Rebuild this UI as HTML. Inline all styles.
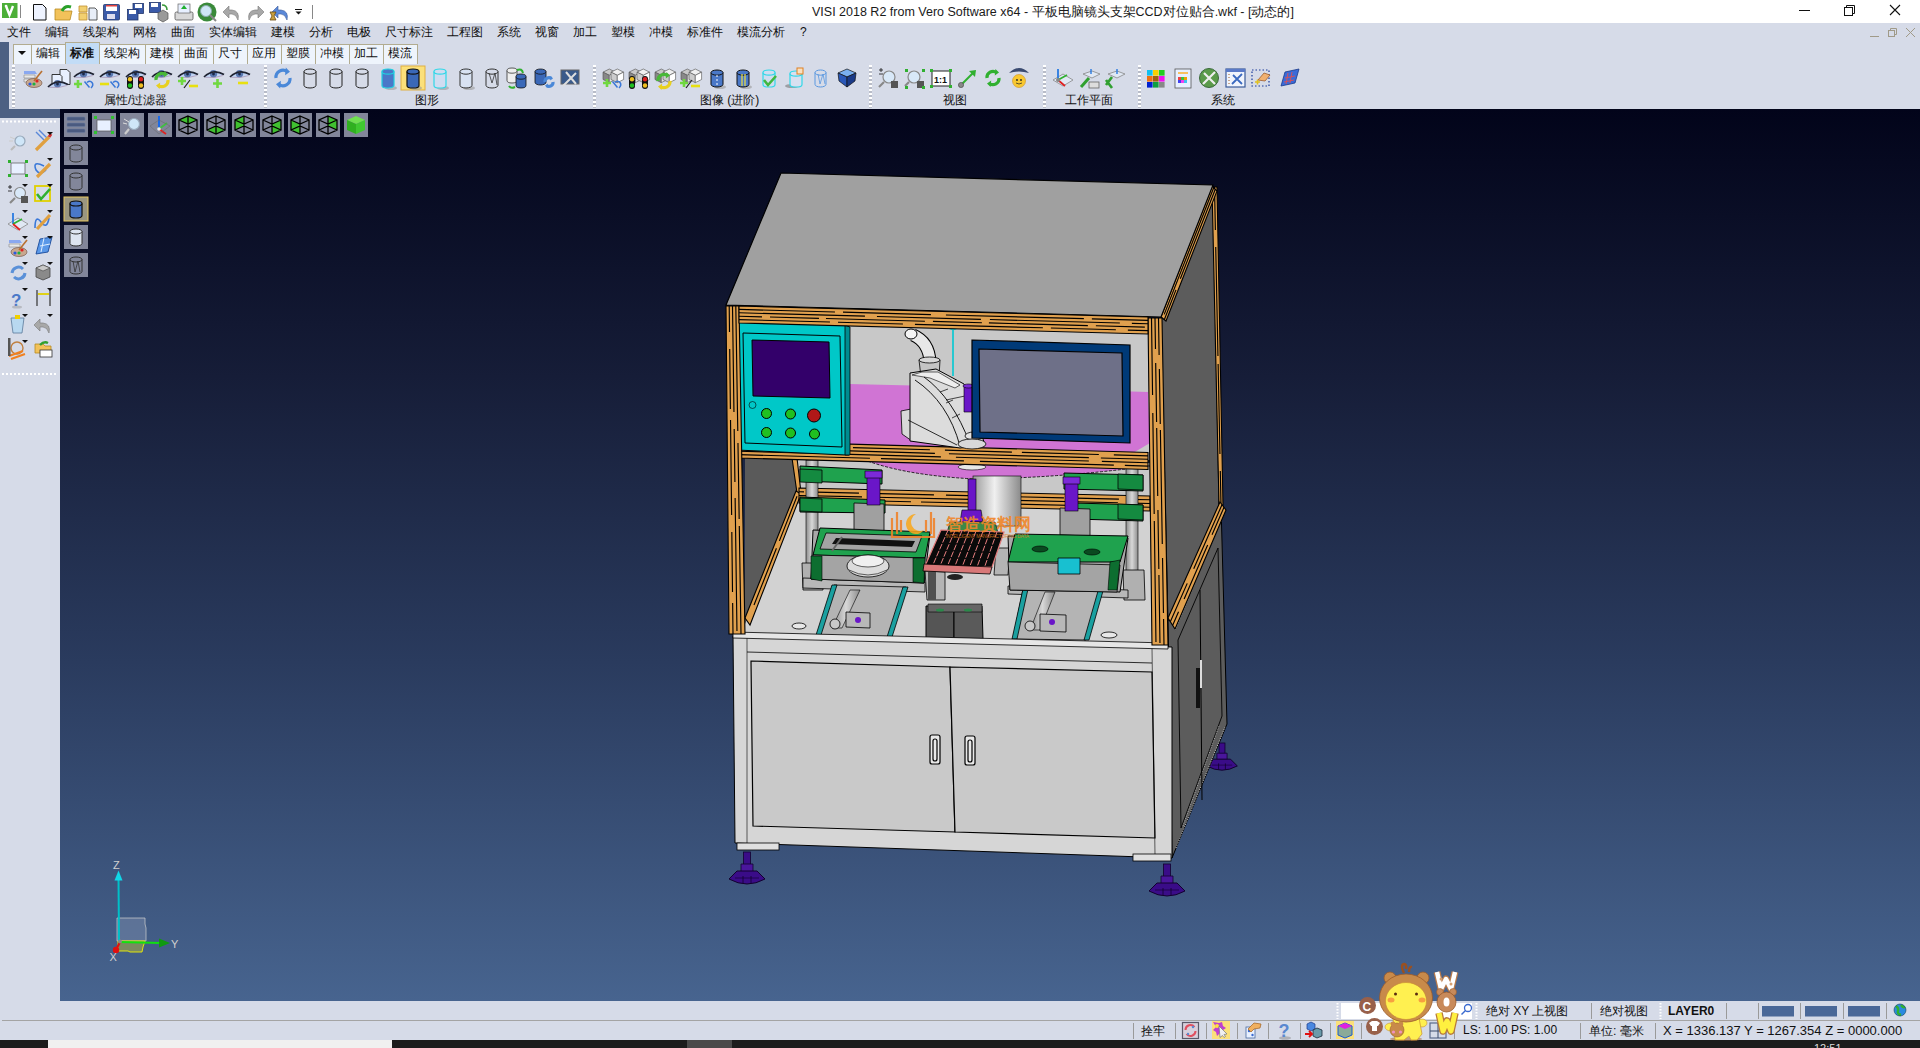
<!DOCTYPE html><html><head><meta charset="utf-8"><style>
*{box-sizing:border-box}
html,body{margin:0;padding:0;width:1920px;height:1048px;overflow:hidden;background:#d6dbe8;font-family:"Liberation Sans",sans-serif;font-size:12px;color:#000}
.a{position:absolute}
.t{position:absolute;white-space:nowrap;line-height:1}
svg{overflow:visible}
</style></head><body>
<div class="a" style="left:0;top:0;width:1920px;height:23px;background:#fff"></div>
<div class="a" style="left:0;top:23px;width:1920px;height:86px;background:#d6dbe8"></div>
<div class="a" style="left:0;top:42px;width:9px;height:76px;background:#4c6083"></div>
<div class="a" style="left:0;top:109px;width:60px;height:9px;background:#4c6083"></div>
<div class="a" style="left:60px;top:109px;width:1860px;height:892px;background:linear-gradient(#02041a 0%,#161d38 30%,#2a3b5e 62%,#47648f 100%)"></div>
<div class="a" style="left:0;top:118px;width:60px;height:883px;background:#d6dbe8"></div>
<div class="a" style="left:0;top:1001px;width:1920px;height:39px;background:#d6dbe8"></div>
<div class="a" style="left:2px;top:1020px;width:1918px;height:1px;background:#a4a4a4"></div>
<div class="a" style="left:0;top:1040px;width:1920px;height:8px;background:#1c1c1c"></div>
<div class="a" style="left:48px;top:1040px;width:344px;height:8px;background:#f0f0f0"></div>
<div class="a" style="left:687px;top:1040px;width:45px;height:8px;background:#4a4a4a"></div>
<div class="t" style="left:812px;top:6px;font-size:12.5px;color:#1a1a1a">VISI 2018 R2 from Vero Software x64 - 平板电脑镜头支架CCD对位贴合.wkf - [动态的]</div>
<svg class="a" style="left:0;top:0" width="1920" height="23"><line x1="1799" y1="10.5" x2="1810" y2="10.5" stroke="#111" stroke-width="1"/><rect x="1844.5" y="7.5" width="8" height="8" fill="none" stroke="#111"/><path d="M1846.5 7.5v-2h8v8h-2" fill="none" stroke="#111"/><path d="M1890 5l10 10M1900 5l-10 10" stroke="#111" stroke-width="1.1"/></svg>
<svg class="a" style="left:0;top:0" width="330" height="23">
<rect x="2" y="3" width="15.5" height="15" fill="#4caf38"/><path d="M6 6l3.5 9 3.5-9" stroke="#fff" stroke-width="2.4" fill="none"/><circle cx="6" cy="6" r="1.3" fill="#fff"/>
<line x1="20.5" y1="5" x2="20.5" y2="18" stroke="#888"/>
<path d="M33.5 4.5h9l3.5 3.5v12h-12.5z" fill="#eef3ff" stroke="#111"/>
<path d="M55 9h7l2 2h8l-2 9h-15z" fill="#f2c25a" stroke="#b88a20" stroke-width=".8"/><path d="M62 11q3-6 9-4" stroke="#2aa02a" stroke-width="3" fill="none"/>
<path d="M79 6h8v6h-8zM79 13h8v7h-8z" fill="#f2d070" stroke="#c09030" stroke-width=".8"/><path d="M89 8h6l2 2v10h-8z" fill="#e8eef8" stroke="#333" stroke-width=".8"/>
<rect x="103.5" y="4.5" width="16" height="15.5" rx="1" fill="#3a5aa8" stroke="#22366a" stroke-width=".8"/><rect x="106" y="5" width="11" height="6" fill="#fff"/><rect x="106" y="5" width="11" height="1.5" fill="#e04040"/><rect x="107" y="14" width="8" height="5" fill="#dde"/>
<rect x="133" y="3.5" width="10.5" height="10" fill="#3a5aa8" stroke="#22366a" stroke-width=".8"/><rect x="135" y="4" width="7" height="4" fill="#fff"/>
<rect x="127.5" y="9.5" width="10.5" height="10.5" fill="#3a5aa8" stroke="#22366a" stroke-width=".8"/><rect x="129" y="10" width="7" height="4" fill="#fff"/>
<rect x="149.5" y="2.5" width="11" height="10" fill="#3a5aa8" stroke="#22366a" stroke-width=".8"/><rect x="151" y="3" width="7" height="4" fill="#fff"/>
<path d="M158 13l5-3 5 3v6l-5 3-5-3z" fill="#9a9a9a" stroke="#555" stroke-width=".7"/><path d="M162 5q5 0 5 5" stroke="#3a9a3a" stroke-width="1.6" fill="none"/>
<rect x="175" y="12" width="18" height="8" rx="1.5" fill="#d8d8d8" stroke="#555" stroke-width=".8"/><rect x="178" y="4" width="12" height="9" fill="#e8f0ff" stroke="#666" stroke-width=".7"/><path d="M184 5l-3 4h6z" fill="#20b030"/>
<circle cx="207" cy="12" r="9.5" fill="#3a8a3a"/><circle cx="206" cy="11" r="5.5" fill="#cfe6f6" stroke="#8aa" stroke-width="1"/><line x1="210" y1="15" x2="216" y2="21" stroke="#888" stroke-width="2"/>
<path d="M238 20q2-9-6-10h-3v-4l-6 6 6 6v-4h3q4 0 6 6z" fill="#a8a8a8" stroke="#777" stroke-width=".6"/>
<path d="M249 20q-2-9 6-10h3v-4l6 6-6 6v-4h-3q-4 0-6 6z" fill="#a8a8a8" stroke="#777" stroke-width=".6"/>
<path d="M287 20q2-9-6-10h-3v-4l-6 6 6 6v-4h3q4 0 6 6z" fill="#5a88d8" stroke="#3a5a9a" stroke-width=".6"/><path d="M270 12h6l-2 4 2 4h-6l2-4z" fill="#c8a040" stroke="#6a4a10" stroke-width=".8"/>
<path d="M295 9.5h7" stroke="#111"/><path d="M295.5 11.5h6l-3 3z" fill="#111"/>
<line x1="312.5" y1="5" x2="312.5" y2="19" stroke="#888"/>
</svg>
<div class="t" style="left:7px;top:26px;font-size:12px;color:#111">文件</div>
<div class="t" style="left:45px;top:26px;font-size:12px;color:#111">编辑</div>
<div class="t" style="left:83px;top:26px;font-size:12px;color:#111">线架构</div>
<div class="t" style="left:133px;top:26px;font-size:12px;color:#111">网格</div>
<div class="t" style="left:171px;top:26px;font-size:12px;color:#111">曲面</div>
<div class="t" style="left:209px;top:26px;font-size:12px;color:#111">实体编辑</div>
<div class="t" style="left:271px;top:26px;font-size:12px;color:#111">建模</div>
<div class="t" style="left:309px;top:26px;font-size:12px;color:#111">分析</div>
<div class="t" style="left:347px;top:26px;font-size:12px;color:#111">电极</div>
<div class="t" style="left:385px;top:26px;font-size:12px;color:#111">尺寸标注</div>
<div class="t" style="left:447px;top:26px;font-size:12px;color:#111">工程图</div>
<div class="t" style="left:497px;top:26px;font-size:12px;color:#111">系统</div>
<div class="t" style="left:535px;top:26px;font-size:12px;color:#111">视窗</div>
<div class="t" style="left:573px;top:26px;font-size:12px;color:#111">加工</div>
<div class="t" style="left:611px;top:26px;font-size:12px;color:#111">塑模</div>
<div class="t" style="left:649px;top:26px;font-size:12px;color:#111">冲模</div>
<div class="t" style="left:687px;top:26px;font-size:12px;color:#111">标准件</div>
<div class="t" style="left:737px;top:26px;font-size:12px;color:#111">模流分析</div>
<div class="t" style="left:800px;top:26px;font-size:12px;color:#111">?</div>
<svg class="a" style="left:1860px;top:26px" width="60" height="14"><line x1="10" y1="10.5" x2="19" y2="10.5" stroke="#a09a88" stroke-width="1"/><rect x="28.5" y="4.5" width="6" height="6" fill="none" stroke="#a09a88"/><path d="M30.5 4.5v-2h6v6h-2" fill="none" stroke="#a09a88"/><path d="M46 2l9 9M55 2l-9 9" stroke="#a09a88" stroke-width="1"/></svg>
<div class="a" style="left:12.5px;top:44px;width:19.0px;height:20px;background:#eef4fc;border:1px solid #b2ac90;border-bottom:none"></div>
<div class="a" style="left:30.5px;top:44px;width:35.0px;height:20px;background:#eef4fc;border:1px solid #b2ac90;border-bottom:none"></div>
<div class="t" style="left:30.5px;top:47px;width:34.0px;text-align:center;font-size:12px;font-weight:normal;color:#111">编辑</div>
<div class="a" style="left:64.5px;top:42px;width:35.0px;height:22px;background:#c2dcf6;border:1px solid #b2ac90;border-bottom:none"></div>
<div class="t" style="left:64.5px;top:47px;width:34.0px;text-align:center;font-size:12px;font-weight:bold;color:#111">标准</div>
<div class="a" style="left:98.5px;top:44px;width:47.0px;height:20px;background:#eef4fc;border:1px solid #b2ac90;border-bottom:none"></div>
<div class="t" style="left:98.5px;top:47px;width:46.0px;text-align:center;font-size:12px;font-weight:normal;color:#111">线架构</div>
<div class="a" style="left:144.5px;top:44px;width:35.0px;height:20px;background:#eef4fc;border:1px solid #b2ac90;border-bottom:none"></div>
<div class="t" style="left:144.5px;top:47px;width:34.0px;text-align:center;font-size:12px;font-weight:normal;color:#111">建模</div>
<div class="a" style="left:178.5px;top:44px;width:35.0px;height:20px;background:#eef4fc;border:1px solid #b2ac90;border-bottom:none"></div>
<div class="t" style="left:178.5px;top:47px;width:34.0px;text-align:center;font-size:12px;font-weight:normal;color:#111">曲面</div>
<div class="a" style="left:212.5px;top:44px;width:35.0px;height:20px;background:#eef4fc;border:1px solid #b2ac90;border-bottom:none"></div>
<div class="t" style="left:212.5px;top:47px;width:34.0px;text-align:center;font-size:12px;font-weight:normal;color:#111">尺寸</div>
<div class="a" style="left:246.5px;top:44px;width:35.0px;height:20px;background:#eef4fc;border:1px solid #b2ac90;border-bottom:none"></div>
<div class="t" style="left:246.5px;top:47px;width:34.0px;text-align:center;font-size:12px;font-weight:normal;color:#111">应用</div>
<div class="a" style="left:280.5px;top:44px;width:35.0px;height:20px;background:#eef4fc;border:1px solid #b2ac90;border-bottom:none"></div>
<div class="t" style="left:280.5px;top:47px;width:34.0px;text-align:center;font-size:12px;font-weight:normal;color:#111">塑膜</div>
<div class="a" style="left:314.5px;top:44px;width:35.0px;height:20px;background:#eef4fc;border:1px solid #b2ac90;border-bottom:none"></div>
<div class="t" style="left:314.5px;top:47px;width:34.0px;text-align:center;font-size:12px;font-weight:normal;color:#111">冲模</div>
<div class="a" style="left:348.5px;top:44px;width:35.0px;height:20px;background:#eef4fc;border:1px solid #b2ac90;border-bottom:none"></div>
<div class="t" style="left:348.5px;top:47px;width:34.0px;text-align:center;font-size:12px;font-weight:normal;color:#111">加工</div>
<div class="a" style="left:382.5px;top:44px;width:35.0px;height:20px;background:#eef4fc;border:1px solid #b2ac90;border-bottom:none"></div>
<div class="t" style="left:382.5px;top:47px;width:34.0px;text-align:center;font-size:12px;font-weight:normal;color:#111">模流</div>
<svg class="a" style="left:17px;top:50px" width="10" height="6"><path d="M1 1h8l-4 4z" fill="#111"/></svg>
<div class="a" style="left:12px;top:65px;width:3px;height:43px;background:repeating-linear-gradient(#fff 0 2px,#b8bcc8 2px 4px)"></div>
<div class="a" style="left:263.5px;top:65px;width:3px;height:43px;background:repeating-linear-gradient(#fff 0 2px,#b8bcc8 2px 4px)"></div>
<div class="a" style="left:593px;top:65px;width:3px;height:43px;background:repeating-linear-gradient(#fff 0 2px,#b8bcc8 2px 4px)"></div>
<div class="a" style="left:869px;top:65px;width:3px;height:43px;background:repeating-linear-gradient(#fff 0 2px,#b8bcc8 2px 4px)"></div>
<div class="a" style="left:1042.5px;top:65px;width:3px;height:43px;background:repeating-linear-gradient(#fff 0 2px,#b8bcc8 2px 4px)"></div>
<div class="a" style="left:1137.5px;top:65px;width:3px;height:43px;background:repeating-linear-gradient(#fff 0 2px,#b8bcc8 2px 4px)"></div>
<div class="t" style="left:104px;top:94px;font-size:12px;color:#111">属性/过滤器</div>
<div class="t" style="left:415px;top:94px;font-size:12px;color:#111">图形</div>
<div class="t" style="left:700px;top:94px;font-size:12px;color:#111">图像 (进阶)</div>
<div class="t" style="left:943px;top:94px;font-size:12px;color:#111">视图</div>
<div class="t" style="left:1065px;top:94px;font-size:12px;color:#111">工作平面</div>
<div class="t" style="left:1211px;top:94px;font-size:12px;color:#111">系统</div>
<svg class="a" style="left:0;top:0" width="1920" height="109"><g transform="translate(24,69)"><path d="M0 2h11l2 3h-13z" fill="#8aa8f0"/><path d="M0 6h11v3h-11zM0 10h11v3h-11z" fill="#e8e8e8" stroke="#888" stroke-width=".6"/><ellipse cx="10" cy="14" rx="8" ry="4.5" fill="#c8a890" stroke="#7a5a4a" stroke-width=".7"/><circle cx="6" cy="15" r="1.6" fill="#2a5ae0"/><circle cx="10" cy="15" r="1.6" fill="#20b040"/><circle cx="13" cy="12" r="1.6" fill="#e02020"/><path d="M10 12l8-10" stroke="#b87030" stroke-width="1.6"/></g><path d="M60 69.5h7l3 3v12h-10z" fill="#e8f0ff" stroke="#222" stroke-width=".9"/><path d="M52 74.5h8l2 2v9h-10z" fill="#e8f0ff" stroke="#222" stroke-width=".9"/><g transform="translate(48,79) scale(1)"><path d="M0 8 Q9 -1 20 5.5 Q11 10 0 8z" fill="#c0d4f4"/><circle cx="9.5" cy="4.8" r="3.7" fill="#5a78b0"/><circle cx="9.5" cy="5" r="1.4" fill="#1a2848"/><circle cx="9" cy="3.2" r=".9" fill="#e0ecff"/><path d="M0 8 Q9 -1 20 5.5" stroke="#1e2230" stroke-width="1.7" fill="none"/><path d="M1 8.3 Q11 9.6 19 6.5" stroke="#a890b0" stroke-width=".7" fill="none"/></g><g transform="translate(74,69) scale(1)"><path d="M0 8 Q9 -1 20 5.5 Q11 10 0 8z" fill="#c0d4f4"/><circle cx="9.5" cy="4.8" r="3.7" fill="#5a78b0"/><circle cx="9.5" cy="5" r="1.4" fill="#1a2848"/><circle cx="9" cy="3.2" r=".9" fill="#e0ecff"/><path d="M0 8 Q9 -1 20 5.5" stroke="#1e2230" stroke-width="1.7" fill="none"/><path d="M1 8.3 Q11 9.6 19 6.5" stroke="#a890b0" stroke-width=".7" fill="none"/></g><path d="M74 84.0h8M78.0 80v8" stroke="#70d840" stroke-width="2.6"/><path d="M84.5 81.5l5 6M87 82.5q3-2.5 5 0t-1 5.5" stroke="#3a78d8" stroke-width="1.5" fill="none"/><g transform="translate(100,69) scale(1)"><path d="M0 8 Q9 -1 20 5.5 Q11 10 0 8z" fill="#c0d4f4"/><circle cx="9.5" cy="4.8" r="3.7" fill="#5a78b0"/><circle cx="9.5" cy="5" r="1.4" fill="#1a2848"/><circle cx="9" cy="3.2" r=".9" fill="#e0ecff"/><path d="M0 8 Q9 -1 20 5.5" stroke="#1e2230" stroke-width="1.7" fill="none"/><path d="M1 8.3 Q11 9.6 19 6.5" stroke="#a890b0" stroke-width=".7" fill="none"/></g><path d="M100 84h9" stroke="#e8e010" stroke-width="2.6"/><path d="M110.5 81.5l5 6M113 82.5q3-2.5 5 0t-1 5.5" stroke="#3a78d8" stroke-width="1.5" fill="none"/><g transform="translate(126,69) scale(1)"><path d="M0 8 Q9 -1 20 5.5 Q11 10 0 8z" fill="#c0d4f4"/><circle cx="9.5" cy="4.8" r="3.7" fill="#5a78b0"/><circle cx="9.5" cy="5" r="1.4" fill="#1a2848"/><circle cx="9" cy="3.2" r=".9" fill="#e0ecff"/><path d="M0 8 Q9 -1 20 5.5" stroke="#1e2230" stroke-width="1.7" fill="none"/><path d="M1 8.3 Q11 9.6 19 6.5" stroke="#a890b0" stroke-width=".7" fill="none"/></g><rect x="127" y="76" width="6" height="13" rx="3" fill="#111"/><circle cx="130" cy="79.3" r="2.2" fill="#f0c020"/><circle cx="130" cy="85.5" r="2.2" fill="#20c020"/><rect x="138" y="76" width="6" height="13" rx="3" fill="#111"/><circle cx="141" cy="79.3" r="2.2" fill="#e02020"/><circle cx="141" cy="85.5" r="2.2" fill="#f0c020"/><g transform="translate(152,69) scale(1)"><path d="M0 8 Q9 -1 20 5.5 Q11 10 0 8z" fill="#c0d4f4"/><circle cx="9.5" cy="4.8" r="3.7" fill="#5a78b0"/><circle cx="9.5" cy="5" r="1.4" fill="#1a2848"/><circle cx="9" cy="3.2" r=".9" fill="#e0ecff"/><path d="M0 8 Q9 -1 20 5.5" stroke="#1e2230" stroke-width="1.7" fill="none"/><path d="M1 8.3 Q11 9.6 19 6.5" stroke="#a890b0" stroke-width=".7" fill="none"/></g><path d="M156 80 a6 6 0 0 1 9.600000000000001 -5.4" stroke="#48b838" stroke-width="3.2" fill="none"/><path d="M164.4 71.0 l3.5999999999999996 3.5999999999999996 l-4.199999999999999 3.0z" fill="#48b838"/><path d="M168 80 a6 6 0 0 1 -9.600000000000001 5.4" stroke="#e8d020" stroke-width="3.2" fill="none"/><path d="M159.6 89.0 l-3.5999999999999996 -3.5999999999999996 l4.199999999999999 -3.0z" fill="#e8d020"/><g transform="translate(178,69) scale(1)"><path d="M0 8 Q9 -1 20 5.5 Q11 10 0 8z" fill="#c0d4f4"/><circle cx="9.5" cy="4.8" r="3.7" fill="#5a78b0"/><circle cx="9.5" cy="5" r="1.4" fill="#1a2848"/><circle cx="9" cy="3.2" r=".9" fill="#e0ecff"/><path d="M0 8 Q9 -1 20 5.5" stroke="#1e2230" stroke-width="1.7" fill="none"/><path d="M1 8.3 Q11 9.6 19 6.5" stroke="#a890b0" stroke-width=".7" fill="none"/></g><path d="M178 81.0h8M182.0 77v8" stroke="#70d840" stroke-width="2.6"/><path d="M184 88l6-8" stroke="#222" stroke-width="1.2"/><path d="M189 86h9" stroke="#e8e010" stroke-width="2.6"/><g transform="translate(204,69) scale(1)"><path d="M0 8 Q9 -1 20 5.5 Q11 10 0 8z" fill="#c0d4f4"/><circle cx="9.5" cy="4.8" r="3.7" fill="#5a78b0"/><circle cx="9.5" cy="5" r="1.4" fill="#1a2848"/><circle cx="9" cy="3.2" r=".9" fill="#e0ecff"/><path d="M0 8 Q9 -1 20 5.5" stroke="#1e2230" stroke-width="1.7" fill="none"/><path d="M1 8.3 Q11 9.6 19 6.5" stroke="#a890b0" stroke-width=".7" fill="none"/></g><path d="M213 83.5h9M217.5 79v9" stroke="#70d840" stroke-width="2.6"/><g transform="translate(230,69) scale(1)"><path d="M0 8 Q9 -1 20 5.5 Q11 10 0 8z" fill="#c0d4f4"/><circle cx="9.5" cy="4.8" r="3.7" fill="#5a78b0"/><circle cx="9.5" cy="5" r="1.4" fill="#1a2848"/><circle cx="9" cy="3.2" r=".9" fill="#e0ecff"/><path d="M0 8 Q9 -1 20 5.5" stroke="#1e2230" stroke-width="1.7" fill="none"/><path d="M1 8.3 Q11 9.6 19 6.5" stroke="#a890b0" stroke-width=".7" fill="none"/></g><path d="M238 83h10" stroke="#e8e010" stroke-width="2.6"/><path d="M276 78 a7 7 0 0 1 11.200000000000001 -6.3" stroke="#4a88d8" stroke-width="3.2" fill="none"/><path d="M285.8 67.5 l4.2 4.2 l-4.8999999999999995 3.5z" fill="#4a88d8"/><path d="M290 78 a7 7 0 0 1 -11.200000000000001 6.3" stroke="#4a88d8" stroke-width="3.2" fill="none"/><path d="M280.2 88.5 l-4.2 -4.2 l4.8999999999999995 -3.5z" fill="#4a88d8"/><path d="M304 71.6 v13.8 a6.0 2.6 0 0 0 12 0 v-13.8" fill="none" stroke="#222" stroke-width="1"/><ellipse cx="310.0" cy="71.6" rx="6.0" ry="2.6" fill="none" stroke="#222" stroke-width="1"/><path d="M330 71.6 v13.8 a6.0 2.6 0 0 0 12 0 v-13.8" fill="none" stroke="#222" stroke-width="1"/><ellipse cx="336.0" cy="71.6" rx="6.0" ry="2.6" fill="none" stroke="#222" stroke-width="1"/><path d="M356 71.6 v13.8 a6.0 2.6 0 0 0 12 0 v-13.8" fill="none" stroke="#222" stroke-width="1"/><ellipse cx="362.0" cy="71.6" rx="6.0" ry="2.6" fill="none" stroke="#222" stroke-width="1"/><ellipse cx="391.0" cy="88" rx="6.0" ry="2" fill="#999" opacity=".6"/><path d="M382 71.6 v13.8 a6.0 2.6 0 0 0 12 0 v-13.8" fill="#4a78c8" stroke="#20d0e0" stroke-width="1.2"/><ellipse cx="388.0" cy="71.6" rx="6.0" ry="2.6" fill="#4a78c8" stroke="#20d0e0" stroke-width="1.2"/><rect x="401" y="66" width="24" height="24" fill="#fbe07a" stroke="#e0b040" stroke-width="1"/><ellipse cx="416.0" cy="88" rx="6.0" ry="2" fill="#999" opacity=".6"/><path d="M407 71.6 v13.8 a6.0 2.6 0 0 0 12 0 v-13.8" fill="#3a68b8" stroke="#111" stroke-width="1.2"/><ellipse cx="413.0" cy="71.6" rx="6.0" ry="2.6" fill="#3a68b8" stroke="#111" stroke-width="1.2"/><ellipse cx="443.0" cy="88" rx="6.0" ry="2" fill="#999" opacity=".6"/><path d="M434 71.6 v13.8 a6.0 2.6 0 0 0 12 0 v-13.8" fill="#d0dcf0" stroke="#30d8e8" stroke-width="1.2"/><ellipse cx="440.0" cy="71.6" rx="6.0" ry="2.6" fill="#d0dcf0" stroke="#30d8e8" stroke-width="1.2"/><ellipse cx="469.0" cy="88" rx="6.0" ry="2" fill="#999" opacity=".6"/><path d="M460 71.6 v13.8 a6.0 2.6 0 0 0 12 0 v-13.8" fill="#d8e2f2" stroke="#333" stroke-width="1"/><ellipse cx="466.0" cy="71.6" rx="6.0" ry="2.6" fill="#d8e2f2" stroke="#333" stroke-width="1"/><path d="M486 71.6 v13.8 a6.0 2.6 0 0 0 12 0 v-13.8" fill="none" stroke="#333" stroke-width="1"/><ellipse cx="492.0" cy="71.6" rx="6.0" ry="2.6" fill="none" stroke="#333" stroke-width="1"/><path d="M489 73l3 10 3-10 2 12" stroke="#333" stroke-width=".8" fill="none"/><path d="M507 70.6 v9.8 a5.0 2.6 0 0 0 10 0 v-9.8" fill="#eee" stroke="#333" stroke-width="0.8"/><ellipse cx="512.0" cy="70.6" rx="5.0" ry="2.6" fill="#eee" stroke="#333" stroke-width="0.8"/><path d="M516 76.6 v8.8 a5.0 2.6 0 0 0 10 0 v-8.8" fill="#3a68b8" stroke="#111" stroke-width="0.8"/><ellipse cx="521.0" cy="76.6" rx="5.0" ry="2.6" fill="#3a68b8" stroke="#111" stroke-width="0.8"/><path d="M517 70q5-2 6 3M509 86q2 3 6 1" stroke="#30b030" stroke-width="2" fill="none"/><path d="M535 71.6 v10.8 a5.5 2.6 0 0 0 11 0 v-10.8" fill="#3a68b8" stroke="#111" stroke-width="0.8"/><ellipse cx="540.5" cy="71.6" rx="5.5" ry="2.6" fill="#3a68b8" stroke="#111" stroke-width="0.8"/><path d="M545 82 a4 4 0 0 1 6.4 -3.6" stroke="#4a88d8" stroke-width="3.2" fill="none"/><path d="M550.6 76.0 l2.4 2.4 l-2.8 2.0z" fill="#4a88d8"/><path d="M553 82 a4 4 0 0 1 -6.4 3.6" stroke="#4a88d8" stroke-width="3.2" fill="none"/><path d="M547.4 88.0 l-2.4 -2.4 l2.8 -2.0z" fill="#4a88d8"/><rect x="561" y="70" width="18" height="14" fill="#3a5a8a" stroke="#666" stroke-width="1"/><path d="M563 86l13-13M566 72l10 12" stroke="#ddd" stroke-width="2"/><g transform="translate(603,69) scale(1.05)"><path d="M0 3l6-3 6 3-6 3z" fill="#c8c8c8" stroke="#555" stroke-width=".6"/><path d="M0 3v7l6 3v-7z" fill="#888" stroke="#555" stroke-width=".6"/><path d="M12 3v7l-6 3v-7z" fill="#e8e8e8" stroke="#555" stroke-width=".6"/></g><g transform="translate(611,69) scale(1.05)"><path d="M0 3l6-3 6 3-6 3z" fill="#f0f0f0" stroke="#555" stroke-width=".6"/><path d="M0 3v7l6 3v-7z" fill="#ccc" stroke="#555" stroke-width=".6"/><path d="M12 3v7l-6 3v-7z" fill="#fff" stroke="#555" stroke-width=".6"/></g><path d="M603 83.0h8M607.0 79v8" stroke="#70d840" stroke-width="2.6"/><path d="M612.5 81.5l5 6M615 82.5q3-2.5 5 0t-1 5.5" stroke="#3a78d8" stroke-width="1.5" fill="none"/><g transform="translate(629,69) scale(1.05)"><path d="M0 3l6-3 6 3-6 3z" fill="#c8c8c8" stroke="#555" stroke-width=".6"/><path d="M0 3v7l6 3v-7z" fill="#888" stroke="#555" stroke-width=".6"/><path d="M12 3v7l-6 3v-7z" fill="#e8e8e8" stroke="#555" stroke-width=".6"/></g><g transform="translate(637,69) scale(1.05)"><path d="M0 3l6-3 6 3-6 3z" fill="#f0f0f0" stroke="#555" stroke-width=".6"/><path d="M0 3v7l6 3v-7z" fill="#ccc" stroke="#555" stroke-width=".6"/><path d="M12 3v7l-6 3v-7z" fill="#fff" stroke="#555" stroke-width=".6"/></g><rect x="629" y="76" width="6" height="13" rx="3" fill="#111"/><circle cx="632" cy="79.3" r="2.2" fill="#f0c020"/><circle cx="632" cy="85.5" r="2.2" fill="#20c020"/><rect x="642" y="76" width="6" height="13" rx="3" fill="#111"/><circle cx="645" cy="79.3" r="2.2" fill="#e02020"/><circle cx="645" cy="85.5" r="2.2" fill="#f0c020"/><g transform="translate(655,69) scale(1.05)"><path d="M0 3l6-3 6 3-6 3z" fill="#c8c8c8" stroke="#555" stroke-width=".6"/><path d="M0 3v7l6 3v-7z" fill="#888" stroke="#555" stroke-width=".6"/><path d="M12 3v7l-6 3v-7z" fill="#e8e8e8" stroke="#555" stroke-width=".6"/></g><g transform="translate(663,69) scale(1.05)"><path d="M0 3l6-3 6 3-6 3z" fill="#f0f0f0" stroke="#555" stroke-width=".6"/><path d="M0 3v7l6 3v-7z" fill="#ccc" stroke="#555" stroke-width=".6"/><path d="M12 3v7l-6 3v-7z" fill="#fff" stroke="#555" stroke-width=".6"/></g><path d="M658 81 a6 6 0 0 1 9.600000000000001 -5.4" stroke="#48b838" stroke-width="3.2" fill="none"/><path d="M666.4 72.0 l3.5999999999999996 3.5999999999999996 l-4.199999999999999 3.0z" fill="#48b838"/><path d="M670 81 a6 6 0 0 1 -9.600000000000001 5.4" stroke="#e8d020" stroke-width="3.2" fill="none"/><path d="M661.6 90.0 l-3.5999999999999996 -3.5999999999999996 l4.199999999999999 -3.0z" fill="#e8d020"/><g transform="translate(681,69) scale(1.05)"><path d="M0 3l6-3 6 3-6 3z" fill="#c8c8c8" stroke="#555" stroke-width=".6"/><path d="M0 3v7l6 3v-7z" fill="#888" stroke="#555" stroke-width=".6"/><path d="M12 3v7l-6 3v-7z" fill="#e8e8e8" stroke="#555" stroke-width=".6"/></g><g transform="translate(689,69) scale(1.05)"><path d="M0 3l6-3 6 3-6 3z" fill="#f0f0f0" stroke="#555" stroke-width=".6"/><path d="M0 3v7l6 3v-7z" fill="#ccc" stroke="#555" stroke-width=".6"/><path d="M12 3v7l-6 3v-7z" fill="#fff" stroke="#555" stroke-width=".6"/></g><path d="M680 83.0h8M684.0 79v8" stroke="#70d840" stroke-width="2.6"/><path d="M686 88l6-8" stroke="#222" stroke-width="1.2"/><path d="M691 86h9" stroke="#e8e010" stroke-width="2.6"/><ellipse cx="720.0" cy="87" rx="6.0" ry="2" fill="#999" opacity=".6"/><path d="M711 72.6 v11.8 a6.0 2.6 0 0 0 12 0 v-11.8" fill="#4a78c8" stroke="#111" stroke-width="1"/><ellipse cx="717.0" cy="72.6" rx="6.0" ry="2.6" fill="#4a78c8" stroke="#111" stroke-width="1"/><path d="M717 75v12" stroke="#fff" stroke-dasharray="2,2"/><ellipse cx="746.0" cy="87" rx="6.0" ry="2" fill="#999" opacity=".6"/><path d="M737 72.6 v11.8 a6.0 2.6 0 0 0 12 0 v-11.8" fill="#4a78c8" stroke="#111" stroke-width="1"/><ellipse cx="743.0" cy="72.6" rx="6.0" ry="2.6" fill="#4a78c8" stroke="#111" stroke-width="1"/><path d="M742 74v12M745 74v12" stroke="#f0e040" stroke-width="1.2"/><path d="M763 72.6 v11.8 a6.0 2.6 0 0 0 12 0 v-11.8" fill="#d0dcf0" stroke="#30d8e8" stroke-width="1.2"/><ellipse cx="769.0" cy="72.6" rx="6.0" ry="2.6" fill="#d0dcf0" stroke="#30d8e8" stroke-width="1.2"/><path d="M764 80l4 5 8-9" stroke="#40b840" stroke-width="2.6" fill="none"/><ellipse cx="792" cy="86" rx="7" ry="2" fill="#777" opacity=".6"/><path d="M790 73.6 v10.8 a6.0 2.6 0 0 0 12 0 v-10.8" fill="#d8e0f0" stroke="#30d8e8" stroke-width="1.2"/><ellipse cx="796.0" cy="73.6" rx="6.0" ry="2.6" fill="#d8e0f0" stroke="#30d8e8" stroke-width="1.2"/><rect x="797" y="68" width="6" height="6" fill="#f8e0c0" stroke="#e08020" stroke-width="1"/><path d="M815 72.6 v11.8 a5.5 2.6 0 0 0 11 0 v-11.8" fill="none" stroke="#5a98e0" stroke-width="1"/><ellipse cx="820.5" cy="72.6" rx="5.5" ry="2.6" fill="none" stroke="#5a98e0" stroke-width="1"/><path d="M818 74l2 10 3-10 2 10" stroke="#5a98e0" stroke-width=".8" fill="none"/><path d="M838 73l9-4 9 4-9 4z" fill="#7ab0f0" stroke="#111" stroke-width=".7"/><path d="M838 73l9 4v10l-8-6z" fill="#2a58b8" stroke="#111" stroke-width=".7"/><path d="M856 73l-9 4v10l8-6z" fill="#1a3a88" stroke="#111" stroke-width=".7"/><circle cx="889" cy="77" r="6" fill="#d8e8f8" stroke="#888" stroke-width="1.2"/><path d="M884 82l-5 5" stroke="#888" stroke-width="2.2"/><path d="M891 81h7v7h-7z" fill="#555"/><path d="M879 70h4M881 68v4M879 74h4" stroke="#111" stroke-width=".8"/><circle cx="914" cy="77" r="6" fill="#d8e8f8" stroke="#888" stroke-width="1.2"/><path d="M909 82l-4 4" stroke="#888" stroke-width="2.2"/><path d="M917 81h7v7h-7z" fill="#555"/><g fill="#30b030"><rect x="905" y="69" width="3" height="3"/><rect x="922" y="69" width="3" height="3"/><rect x="905" y="86" width="3" height="3"/><rect x="922" y="86" width="3" height="3"/></g><rect x="932" y="71" width="18" height="15" fill="#fff" stroke="#222" stroke-width="1"/><text x="934" y="83" font-size="9" font-weight="bold" fill="#111" font-family="Liberation Sans">1:1</text><g fill="#30b030"><rect x="930" y="69" width="3" height="3"/><rect x="949" y="69" width="3" height="3"/><rect x="930" y="85" width="3" height="3"/><rect x="949" y="85" width="3" height="3"/></g><path d="M961 85l13-13" stroke="#30b030" stroke-width="2"/><path d="M976 70l-7 1 6 6z" fill="#30b030"/><circle cx="961" cy="85" r="2.6" fill="#888" stroke="#444" stroke-width=".6"/><path d="M987 78 a6 6 0 0 1 9.600000000000001 -5.4" stroke="#30b030" stroke-width="3.2" fill="none"/><path d="M995.4 69.0 l3.5999999999999996 3.5999999999999996 l-4.199999999999999 3.0z" fill="#30b030"/><path d="M999 78 a6 6 0 0 1 -9.600000000000001 5.4" stroke="#30b030" stroke-width="3.2" fill="none"/><path d="M990.6 87.0 l-3.5999999999999996 -3.5999999999999996 l4.199999999999999 -3.0z" fill="#30b030"/><path d="M1009 73 Q1019 63 1029 73 Q1019 70 1009 73z" fill="#3a4a70"/><circle cx="1019" cy="81" r="6.5" fill="#f8c830" stroke="#d09020" stroke-width=".6"/><circle cx="1017" cy="80" r=".9" fill="#222"/><circle cx="1021" cy="80" r=".9" fill="#222"/><path d="M1016 83q3 2 6 0" stroke="#222" stroke-width=".7" fill="none"/><path d="M1053 80l10-6 10 6-10 6z" fill="#e0e8f4" stroke="#888" stroke-width=".8"/><path d="M1058 80v-11" stroke="#2a7ae0" stroke-width="1.8"/><path d="M1058 80l9-5" stroke="#30b030" stroke-width="1.8"/><path d="M1058 80l7 6" stroke="#e02020" stroke-width="1.8"/><circle cx="1058" cy="80" r="2" fill="#888"/><path d="M1083 74l9-3 8 3-8 4z" fill="#e0e8f4" stroke="#888" stroke-width=".8"/><path d="M1081 87l8-9" stroke="#30a030" stroke-width="3"/><rect x="1089" y="82" width="10" height="6" fill="#ddd" stroke="#666" stroke-width=".8"/><path d="M1091 74v-5" stroke="#2a7ae0" stroke-width="1.4"/><path d="M1108 74l9-3 8 3-8 4z" fill="#e0e8f4" stroke="#888" stroke-width=".8"/><path d="M1106 85l6-8M1106 80l6 8" stroke="#30a030" stroke-width="2.6"/><path d="M1117 74v-5" stroke="#2a7ae0" stroke-width="1.4"/><rect x="1147" y="70" width="5.6" height="5.6" fill="#10c0f0"/><rect x="1153" y="70" width="5.6" height="5.6" fill="#f8d000"/><rect x="1159" y="70" width="5.6" height="5.6" fill="#20d020"/><rect x="1147" y="76" width="5.6" height="5.6" fill="#f07010"/><rect x="1153" y="76" width="5.6" height="5.6" fill="#a06010"/><rect x="1159" y="76" width="5.6" height="5.6" fill="#f010f0"/><rect x="1147" y="82" width="5.6" height="5.6" fill="#0020d0"/><rect x="1153" y="82" width="5.6" height="5.6" fill="#10a040"/><rect x="1159" y="82" width="5.6" height="5.6" fill="#888"/><rect x="1175" y="69" width="16" height="19" fill="#e8f0ff" stroke="#555" stroke-width=".8"/><rect x="1178" y="72" width="10" height="2" fill="#f8c060"/><g><rect x="1178" y="77" width="3" height="3" fill="#f04040"/><rect x="1181" y="77" width="3" height="3" fill="#40c040"/><rect x="1184" y="77" width="3" height="3" fill="#f0a000"/><rect x="1178" y="80" width="3" height="3" fill="#4040f0"/><rect x="1181" y="80" width="3" height="3" fill="#f040f0"/><rect x="1184" y="80" width="3" height="3" fill="#40c0f0"/></g><circle cx="1209" cy="78" r="9.5" fill="#5a9a4a" stroke="#3a6a3a" stroke-width="1"/><path d="M1203 84l12-12M1204 73l11 11" stroke="#eee" stroke-width="2.2"/><rect x="1226" y="69" width="19" height="18" fill="#f0f4fc" stroke="#3a5a9a" stroke-width="1.2"/><rect x="1226" y="69" width="19" height="3" fill="#5a7ac8"/><path d="M1232 84l10-10M1233 75l9 9" stroke="#3a6ac0" stroke-width="1.8"/><path d="M1229 74v12" stroke="#a05a20" stroke-dasharray="1,2"/><rect x="1252" y="70" width="17" height="16" fill="none" stroke="#1a3a9a" stroke-width="1.2" stroke-dasharray="1.5,2"/><path d="M1258 80l6-7 6 2-5 6z" fill="#f0b070" stroke="#a06030" stroke-width=".8"/><path d="M1255 82h5M1257.5 79.5v5" stroke="#e0c020" stroke-width="1.6"/><path d="M1281 86l4-14 14-3-4 14z" fill="#3a6ad8" stroke="#1a3a8a" stroke-width=".8"/><path d="M1285 78l10-2M1284 82l10-2M1288 73l-2 11M1292 72l-2 11" stroke="#e05050" stroke-width=".9"/></svg>
<svg class="a" style="left:0;top:0" width="1920" height="1048"><rect x="64" y="113" width="24" height="24" fill="#82869a"/><rect x="92" y="113" width="24" height="24" fill="#82869a"/><rect x="120" y="113" width="24" height="24" fill="#82869a"/><rect x="148" y="113" width="24" height="24" fill="#82869a"/><rect x="176" y="113" width="24" height="24" fill="#82869a"/><rect x="204" y="113" width="24" height="24" fill="#82869a"/><rect x="232" y="113" width="24" height="24" fill="#82869a"/><rect x="260" y="113" width="24" height="24" fill="#82869a"/><rect x="288" y="113" width="24" height="24" fill="#82869a"/><rect x="316" y="113" width="24" height="24" fill="#82869a"/><rect x="344" y="113" width="24" height="24" fill="#82869a"/><g fill="#4a5a80" stroke="#6a7aa0" stroke-width=".6"><rect x="67" y="117" width="18" height="3.6" rx="1"/><rect x="67" y="123" width="18" height="3.6" rx="1"/><rect x="67" y="129" width="18" height="3.6" rx="1"/></g><rect x="97" y="120" width="14" height="11" fill="#e8f0ff" stroke="#555" stroke-width=".7"/><g fill="#30c030"><rect x="94" y="116" width="3" height="3"/><rect x="111" y="116" width="3" height="3"/><rect x="94" y="131" width="3" height="3"/><rect x="111" y="131" width="3" height="3"/></g><circle cx="134" cy="124" r="5.5" fill="#cfe6f8" stroke="#9ab" stroke-width="1.2"/><path d="M129 129l-4 5" stroke="#ccc" stroke-width="2.2"/><path d="M124 119l5 3M123 123l4 1" stroke="#ddd" stroke-width="1"/><path d="M159 129v-13" stroke="#1a6ae8" stroke-width="2"/><path d="M159 129l8-6" stroke="#40c040" stroke-width="1.8"/><path d="M159 129l7 5" stroke="#e02020" stroke-width="1.8"/><circle cx="159" cy="129" r="1.8" fill="#eee"/><path d="M150 126l9-6 11 6-11 8z" fill="none" stroke="#666" stroke-width=".5"/><path d="M179 120L188 116L197 120L188 124z" fill="#40c030"/><path d="M188 116L197 120L197 130L188 134L179 130L179 120z M179 120L188 124L197 120M188 124V134M188 116V126M179 130L188 126L197 130" fill="none" stroke="#000" stroke-width="1.3"/><path d="M207 130L216 126L225 130L216 134z" fill="#40c030"/><path d="M216 116L225 120L225 130L216 134L207 130L207 120z M207 120L216 124L225 120M216 124V134M216 116V126M207 130L216 126L225 130" fill="none" stroke="#000" stroke-width="1.3"/><path d="M235 120L244 116L244 126L235 130z" fill="#40c030"/><path d="M244 116L253 120L253 130L244 134L235 130L235 120z M235 120L244 124L253 120M244 124V134M244 116V126M235 130L244 126L253 130" fill="none" stroke="#000" stroke-width="1.3"/><path d="M281 120L272 124L272 134L281 130z" fill="#40c030"/><path d="M272 116L281 120L281 130L272 134L263 130L263 120z M263 120L272 124L281 120M272 124V134M272 116V126M263 130L272 126L281 130" fill="none" stroke="#000" stroke-width="1.3"/><path d="M291 120L300 124L300 134L291 130z" fill="#40c030"/><path d="M300 116L309 120L309 130L300 134L291 130L291 120z M291 120L300 124L309 120M300 124V134M300 116V126M291 130L300 126L309 130" fill="none" stroke="#000" stroke-width="1.3"/><path d="M337 120L328 116L328 126L337 130z" fill="#40c030"/><path d="M328 116L337 120L337 130L328 134L319 130L319 120z M319 120L328 124L337 120M328 124V134M328 116V126M319 130L328 126L337 130" fill="none" stroke="#000" stroke-width="1.3"/><path d="M347 120L356 116L365 120L356 124z" fill="#70e050"/><path d="M347 120L356 124L356 134L347 130z" fill="#30b020"/><path d="M365 120L356 124L356 134L365 130z" fill="#40c830"/><rect x="64" y="141" width="24" height="24" fill="#82869a"/><rect x="64" y="169" width="24" height="24" fill="#82869a"/><rect x="64" y="197" width="24" height="24" fill="#9a9680" stroke="#e8c860" stroke-width="1"/><rect x="64" y="225" width="24" height="24" fill="#82869a"/><rect x="64" y="253" width="24" height="24" fill="#82869a"/><path d="M70 147.5v12a6 2.5 0 0 0 12 0v-12" fill="none" stroke="#333" stroke-width="1"/><ellipse cx="76" cy="147.5" rx="6" ry="2.5" fill="none" stroke="#333" stroke-width="1"/><path d="M70 175.5v12a6 2.5 0 0 0 12 0v-12" fill="none" stroke="#333" stroke-width="1"/><ellipse cx="76" cy="175.5" rx="6" ry="2.5" fill="none" stroke="#333" stroke-width="1"/><path d="M70 203.5v12a6 2.5 0 0 0 12 0v-12" fill="#4a78c8" stroke="#111" stroke-width="1.2"/><ellipse cx="76" cy="203.5" rx="6" ry="2.5" fill="#4a78c8" stroke="#111" stroke-width="1.2"/><path d="M70 231.5v12a6 2.5 0 0 0 12 0v-12" fill="#dde4f0" stroke="#333" stroke-width="1"/><ellipse cx="76" cy="231.5" rx="6" ry="2.5" fill="#dde4f0" stroke="#333" stroke-width="1"/><path d="M70 259.5v12a6 2.5 0 0 0 12 0v-12" fill="none" stroke="#333" stroke-width="1"/><ellipse cx="76" cy="259.5" rx="6" ry="2.5" fill="none" stroke="#333" stroke-width="1"/><path d="M73 261l2 11 3-11 2 11" stroke="#333" stroke-width=".8" fill="none"/><line x1="2" y1="121.5" x2="58" y2="121.5" stroke="#fff" stroke-width="2" stroke-dasharray="2,2"/><line x1="2" y1="374" x2="58" y2="374" stroke="#fff" stroke-width="2" stroke-dasharray="2,2"/><circle cx="20" cy="141" r="5" fill="#cfe6f8" stroke="#9ab" stroke-width="1.2"/><path d="M15 146l-4 4" stroke="#bbb" stroke-width="2.2"/><path d="M10 137l5 2M9 141l4 0" stroke="#ccc"/><path d="M36 132l8 8M39 130l8 8" stroke="#5a88d8" stroke-width="1.4"/><path d="M36 150l13-13" stroke="#e0a040" stroke-width="3.2"/><path d="M49 137l2-3" stroke="#d03030" stroke-width="3"/><path d="M47 132h6l-3 3z" fill="#111"/><rect x="11" y="163" width="14" height="11" fill="#e8f0ff" stroke="#555" stroke-width=".7"/><g fill="#30b030"><rect x="8" y="160" width="3" height="3"/><rect x="25" y="160" width="3" height="3"/><rect x="8" y="174" width="3" height="3"/><rect x="25" y="174" width="3" height="3"/></g><path d="M44 166q-12-6-8 4 4 6 10 0" stroke="#3a78d8" stroke-width="1.6" fill="none"/><path d="M37 177l13-13" stroke="#e0a040" stroke-width="3.2"/><path d="M47 158h6l-3 3z" fill="#111"/><circle cx="20" cy="193" r="5.5" fill="#d8e8f8" stroke="#888" stroke-width="1.2"/><path d="M15 198l-5 5" stroke="#888" stroke-width="2.2"/><rect x="21" y="196" width="7" height="7" fill="#555"/><path d="M8 187h4M10 185v4M8 191h4" stroke="#111" stroke-width=".8"/><path d="M22 184h6l-3 3z" fill="#111"/><rect x="35" y="186" width="15" height="15" fill="none" stroke="#e0d000" stroke-width="1.8"/><path d="M37 194l4 5 9-10" stroke="#30b030" stroke-width="2.6" fill="none"/><path d="M47 184h6l-3 3z" fill="#111"/><path d="M8 224l10-6 10 6-10 6z" fill="#e0e8f4" stroke="#888" stroke-width=".8"/><path d="M13 224v-11" stroke="#2a7ae0" stroke-width="1.8"/><path d="M13 224l9-5" stroke="#30b030" stroke-width="1.8"/><path d="M13 224l7 6" stroke="#e02020" stroke-width="1.8"/><path d="M22 210h6l-3 3z" fill="#111"/><path d="M35 228q0-14 6-6t8-4" stroke="#3a78d8" stroke-width="1.6" fill="none"/><path d="M37 229l13-14" stroke="#e0a040" stroke-width="3.2"/><path d="M47 210h6l-3 3z" fill="#111"/><g transform="translate(9,238)"><path d="M0 2h11l2 3h-13z" fill="#8aa8f0"/><path d="M0 6h11v3h-11z" fill="#e8e8e8" stroke="#888" stroke-width=".6"/><ellipse cx="10" cy="14" rx="8" ry="4.5" fill="#c8a890" stroke="#7a5a4a" stroke-width=".7"/><circle cx="6" cy="15" r="1.6" fill="#2a5ae0"/><circle cx="10" cy="15" r="1.6" fill="#20b040"/><circle cx="13" cy="12" r="1.6" fill="#e02020"/><path d="M10 12l8-10" stroke="#b87030" stroke-width="1.6"/></g><path d="M22 236h6l-3 3z" fill="#111"/><path d="M36 254l4-15 12-2-4 15z" fill="#5a98e8" stroke="#1a4a9a" stroke-width=".9"/><path d="M40 246l10-2M44 238l-3 14" stroke="#dfefff" stroke-width="1"/><path d="M47 236h6l-3 3z" fill="#111"/><path d="M12 273a6.5 6.5 0 0 1 11-4" stroke="#5a90d8" stroke-width="3" fill="none"/><path d="M25 273a6.5 6.5 0 0 1-11 4" stroke="#5a90d8" stroke-width="3" fill="none"/><path d="M22 262h6l-3 3z" fill="#111"/><path d="M36 268l7-3 7 3v9l-7 3-7-3z" fill="#8a8a8a" stroke="#444" stroke-width=".8"/><path d="M36 268l7 3 7-3-7-3z" fill="#c8c8c8" stroke="#444" stroke-width=".6"/><path d="M47 262h6l-3 3z" fill="#111"/><text x="11" y="306" font-size="17" font-weight="bold" fill="#4a78c8" font-family="Liberation Sans">?</text><ellipse cx="17" cy="307" rx="5" ry="1.5" fill="#999" opacity=".5"/><path d="M22 288h6l-3 3z" fill="#111"/><path d="M37 290v16M50 290v16" stroke="#333" stroke-width="1.2"/><path d="M38 294h11" stroke="#e0d000" stroke-width="1.8"/><path d="M47 288h6l-3 3z" fill="#111"/><path d="M11 318h13l-2 15h-9z" fill="#b8d8f0" stroke="#5a7a9a" stroke-width=".8"/><rect x="15" y="315" width="5" height="4" fill="#f0d000"/><path d="M22 314h6l-3 3z" fill="#111"/><path d="M49 333q2-9-6-10h-3v-4l-6 6 6 6v-4h3q4 0 6 6z" fill="#a8a8a8" stroke="#777" stroke-width=".6"/><path d="M47 314h6l-3 3z" fill="#111"/><circle cx="17" cy="348" r="6" fill="none" stroke="#c08040" stroke-width="1.4"/><path d="M9 356l14-5M11 359l14-5" stroke="#f08020" stroke-width="2"/><rect x="8" y="338" width="2.5" height="18" fill="#555"/><path d="M22 340h6l-3 3z" fill="#111"/><path d="M35 344h8l2 2h6v7h-16z" fill="#f2c25a" stroke="#b88a20" stroke-width=".8"/><rect x="40" y="350" width="12" height="7" fill="#fff" stroke="#333" stroke-width=".8"/><path d="M40 345q4-4 8-2" stroke="#30a030" stroke-width="2.4" fill="none"/><path d="M117 918h28v6l1 4v13h-29z" fill="#8090b0" fill-opacity=".45" stroke="#d0d0d0" stroke-width=".7"/><path d="M118 941h27l-2 6-1 5h-12l-2-1h-10z" fill="#7a8a60" stroke="#f0f000" stroke-width=".9"/><line x1="119" y1="941" x2="118.5" y2="878" stroke="#00c0c8" stroke-width="2"/><path d="M114.5 880.5 L118.5 870.5 L122.5 880.5z" fill="#10d8e8"/><text x="113" y="869" font-size="11" fill="#d0d0d0" font-family="Liberation Sans">Z</text><line x1="120" y1="942" x2="161" y2="943" stroke="#10e010" stroke-width="2"/><path d="M159 938.5l11 4.5-11 4.5z" fill="#109a10"/><text x="171" y="948" font-size="11" fill="#d0d0d0" font-family="Liberation Sans">Y</text><line x1="120" y1="942" x2="116" y2="950" stroke="#e01010" stroke-width="2.2"/><circle cx="116" cy="950" r="3.2" fill="#e01010"/><circle cx="120" cy="941.5" r="2" fill="#888"/><text x="109.5" y="961" font-size="11" fill="#d0d0d0" font-family="Liberation Sans">X</text></svg>
<svg class="a" style="left:0;top:0" width="1920" height="1048" viewBox="0 0 1920 1048">
<defs><linearGradient id="cylg" x1="0" x2="1"><stop offset="0" stop-color="#9a9a9a"/><stop offset=".45" stop-color="#f0f0f0"/><stop offset="1" stop-color="#8a8a8a"/></linearGradient>
<linearGradient id="colg" x1="0" x2="1"><stop offset="0" stop-color="#8c8c8c"/><stop offset=".5" stop-color="#d8d8d8"/><stop offset="1" stop-color="#8c8c8c"/></linearGradient></defs>
<polygon points="1161,317 1213,186 1219,505 1168,621" fill="#5c5c5c" stroke="#000" stroke-width="1"/>
<polygon points="1212,187 1219,505 1223,505 1217,187" fill="#e0a04e" stroke="#000" stroke-width="1.1"/>
<line x1="1214.5" y1="187.0" x2="1221.0" y2="505.0" stroke="#000" stroke-width="1.15" stroke-dasharray="90,17,109,8" stroke-dashoffset="47"/>
<polygon points="1212,186 1161,317 1166,321 1217,191" fill="#e0a04e" stroke="#000" stroke-width="1.1"/>
<line x1="1213.7" y1="187.7" x2="1162.7" y2="318.3" stroke="#000" stroke-width="1.15" stroke-dasharray="137,15,48,15" stroke-dashoffset="1"/>
<line x1="1215.3" y1="189.3" x2="1164.3" y2="319.7" stroke="#000" stroke-width="1.15" stroke-dasharray="120,12,110,9" stroke-dashoffset="24"/>
<rect x="1219.025" y="743" width="5.95" height="11.049999999999999" fill="#3a0c88" stroke="#12022e" stroke-width="0.8"/>
<polygon points="1216.9,753.2 1227.1,753.2 1227.1,760.0 1216.9,760.0" fill="#4a169c" stroke="#12022e" stroke-width="0.8"/>
<path d="M1213.5,759.15 L1230.5,759.15 L1237.3,765.95 Q1222,774.45 1206.7,765.95Z" fill="#3a0c88" stroke="#12022e" stroke-width="1"/>
<line x1="1218.6" y1="763.4" x2="1218.6" y2="769.35" stroke="#12022e" stroke-width="0.8"/>
<line x1="1225.4" y1="763.4" x2="1225.4" y2="769.35" stroke="#12022e" stroke-width="0.8"/>
<line x1="1211.8" y1="765.1" x2="1232.2" y2="765.1" stroke="#12022e" stroke-width="0.6"/>
<polygon points="1168,621 1221,505 1227,724 1172,858" fill="#5c5c5c" stroke="#000" stroke-width="1"/>
<polygon points="1178,640 1218,548 1222,716 1181,828" fill="none" stroke="#000" stroke-width="0.9"/>
<polyline points="1175,630 1223,516" fill="none" stroke="#d8d8d8" stroke-width="1" stroke-dasharray="1,1.5"/>
<polyline points="1176,848 1225,727" fill="none" stroke="#c8c8c8" stroke-width="1" stroke-dasharray="1,1.5"/>
<polyline points="1183,826 1219,726" fill="none" stroke="#bbb" stroke-width=".8" stroke-dasharray="1,1.5"/>
<line x1="1200" y1="590" x2="1202" y2="800" stroke="#000" stroke-width="1"/>
<rect x="1196" y="668" width="4" height="40" fill="#111"/>
<rect x="1200" y="660" width="2" height="28" fill="#ddd"/>
<polygon points="1220,502 1168,618 1175,629 1226,510" fill="#e0a04e" stroke="#000" stroke-width="1.1"/>
<line x1="1222.0" y1="504.7" x2="1170.3" y2="621.7" stroke="#000" stroke-width="1.15" stroke-dasharray="120,16,110,13" stroke-dashoffset="50"/>
<line x1="1224.0" y1="507.3" x2="1172.7" y2="625.3" stroke="#000" stroke-width="1.15" stroke-dasharray="79,11,59,14" stroke-dashoffset="49"/>
<polygon points="781,173 1213,185 1161,317 726,305" fill="#a0a0a0" stroke="#000" stroke-width="1.2"/>
<polygon points="739,322 1148,332 1150,460 739,452" fill="#c8c8c8"/>
<polygon points="849,384 1020,388 1148,392 1150,443 1133,453 849,450" fill="#d074d4"/>
<polygon points="745,455 1150,463 1152,525 798,515" fill="#c8c8c8"/>
<polygon points="745,456 794,458 799,493 745,624" fill="#5a5a5a"/>
<polygon points="792,458 797,493 801,493 797,458" fill="#e0a04e" stroke="#000" stroke-width="1.1"/>
<polygon points="745,624 799,496 1150,505 1152,645 745,634" fill="#d2d2d2"/>
<polygon points="796,491 745,618 750,625 801,494" fill="#e0a04e" stroke="#000" stroke-width="1.1"/>
<line x1="798.5" y1="492.5" x2="747.5" y2="621.5" stroke="#000" stroke-width="1.15" stroke-dasharray="61,18,48,8" stroke-dashoffset="75"/>
<path d="M860,458 L1150,466 Q1060,478 975,479 Q900,475 860,458Z" fill="#d074d4" stroke="#000" stroke-width=".8" stroke-dasharray="3,1.5"/>
<ellipse cx="972" cy="467" rx="14" ry="3" fill="#e8e8e8" stroke="#000" stroke-width="0.6"/>
<polygon points="799,488 1150,496 1150,511 799,503" fill="#e0a04e" stroke="#000" stroke-width="1.1"/>
<line x1="799.0" y1="491.8" x2="1150.0" y2="499.8" stroke="#000" stroke-width="1.15" stroke-dasharray="65,12,43,10" stroke-dashoffset="60"/>
<line x1="799.0" y1="495.5" x2="1150.0" y2="503.5" stroke="#000" stroke-width="1.15" stroke-dasharray="136,14,94,12" stroke-dashoffset="73"/>
<line x1="799.0" y1="499.2" x2="1150.0" y2="507.2" stroke="#000" stroke-width="1.15" stroke-dasharray="116,10,86,7" stroke-dashoffset="4"/>
<ellipse cx="799" cy="626" rx="7" ry="3" fill="#e8e8e8" stroke="#000" stroke-width="0.8"/>
<ellipse cx="1109" cy="635" rx="8" ry="3" fill="#e8e8e8" stroke="#000" stroke-width="0.8"/>
<rect x="806" y="460" width="12" height="125" fill="url(#colg)" stroke="#000" stroke-width="0.6"/>
<rect x="1126" y="468" width="12" height="125" fill="url(#colg)" stroke="#000" stroke-width="0.6"/>
<polygon points="802,563 822,563 823,590 803,590" fill="#b0b0b0" stroke="#000" stroke-width="0.8"/>
<polygon points="1123,570 1144,570 1145,600 1124,600" fill="#b0b0b0" stroke="#000" stroke-width="0.8"/>
<rect x="973" y="476" width="48" height="50" fill="url(#cylg)" stroke="#000" stroke-width=".6"/>
<polygon points="800,466 882,470 882,484 800,481" fill="#1fa24e" stroke="#000" stroke-width="1"/>
<polygon points="800,469 822,470 822,483 800,482" fill="#148a40" stroke="#000" stroke-width="0.8"/>
<polygon points="800,497 885,500 885,513 800,512" fill="#1fa24e" stroke="#000" stroke-width="1"/>
<polygon points="800,498 822,499 822,512 800,511" fill="#148a40" stroke="#000" stroke-width="0.8"/>
<polygon points="854,503 884,504 884,532 854,531" fill="#a0a0a0" stroke="#000" stroke-width="0.8"/>
<rect x="867" y="473" width="13" height="32" fill="#6a16c8" stroke="#000" stroke-width="0.6"/>
<rect x="865" y="471" width="17" height="7" fill="#7c2ad8" stroke="#000" stroke-width="0.6"/>
<polygon points="1064,473 1143,475 1143,491 1064,489" fill="#1fa24e" stroke="#000" stroke-width="1"/>
<polygon points="1118,474 1143,475 1143,490 1118,489" fill="#148a40" stroke="#000" stroke-width="0.8"/>
<polygon points="1075,503 1143,505 1143,521 1075,519" fill="#1fa24e" stroke="#000" stroke-width="1"/>
<polygon points="1118,504 1143,505 1143,520 1118,519" fill="#148a40" stroke="#000" stroke-width="0.8"/>
<polygon points="1060,508 1090,509 1090,536 1060,535" fill="#a0a0a0" stroke="#000" stroke-width="0.8"/>
<rect x="1065" y="479" width="13" height="32" fill="#6a16c8" stroke="#000" stroke-width="0.6"/>
<rect x="1063" y="477" width="17" height="7" fill="#7c2ad8" stroke="#000" stroke-width="0.6"/>
<rect x="968" y="479" width="8" height="34" fill="#6a16c8" stroke="#000" stroke-width="0.6"/>
<polygon points="962,510 981,510 983,522 960,522" fill="#6a16c8" stroke="#000" stroke-width="0.6"/>
<polygon points="950,522 995,522 1000,540 945,540" fill="#3c8a48" stroke="#000" stroke-width="0.6"/>
<polygon points="803,578 925,582 925,592 803,588" fill="#b8b8b8" stroke="#000" stroke-width="0.8"/>
<polygon points="834,585 906,587 889,637 818,635" fill="#b4b4b4" stroke="#000" stroke-width="0.8"/>
<polygon points="832,585 837,585 821,635 816,635" fill="#1aa0a0" stroke="#000" stroke-width="0.8"/>
<polygon points="903,587 908,587 892,637 887,637" fill="#1aa0a0" stroke="#000" stroke-width="0.8"/>
<polygon points="850,590 860,590 842,628 832,628" fill="url(#colg)" stroke="#000" stroke-width=".6"/>
<polygon points="846,612 870,613 870,628 846,627" fill="#b8b8b8" stroke="#000" stroke-width="0.8"/>
<ellipse cx="858" cy="620" rx="3" ry="3" fill="#6a16c8"/>
<ellipse cx="835" cy="624" rx="5" ry="5" fill="#c8c8c8" stroke="#000" stroke-width="0.8"/>
<polygon points="813,530 930,534 924,583 811,579" fill="#a8a8a8" stroke="#000" stroke-width="1"/>
<polygon points="820,528 930,532 925,558 813,555" fill="#1fa24e" stroke="#000" stroke-width="1"/>
<polygon points="826,533 922,536 916,552 820,549" fill="#a4a4a4" stroke="#000" stroke-width="0.8"/>
<polygon points="836,538 915,541 912,547 832,544" fill="#111"/>
<line x1="842" y1="537" x2="832" y2="551" stroke="#666" stroke-width="2"/>
<polygon points="813,555 925,558 924,583 811,579" fill="#a4a4a4" stroke="#000" stroke-width="0.8"/>
<polygon points="811,556 822,556 822,581 811,579" fill="#0d6e30" stroke="#000" stroke-width="0.6"/>
<polygon points="913,558 925,558 924,583 913,582" fill="#0d6e30" stroke="#000" stroke-width="0.6"/>
<ellipse cx="868" cy="566" rx="21" ry="11" fill="#dcdcdc" stroke="#000" stroke-width="0.8"/>
<ellipse cx="868" cy="561" rx="16" ry="6" fill="#f0f0f0" stroke="#000" stroke-width="0.6"/>
<path d="M849,570 Q868,580 887,570" fill="none" stroke="#000" stroke-width=".6"/>
<polygon points="925,571 945,572 945,600 927,600" fill="#b4b4b4" stroke="#000" stroke-width="0.8"/>
<polygon points="928,572 936,572 936,600 928,600" fill="#505050"/>
<polygon points="996,548 1010,548 1008,575 994,575" fill="#b4b4b4" stroke="#000" stroke-width="0.8"/>
<polygon points="941,530 1004,532 992,567 925,566" fill="#0a0a0a" stroke="#e07878" stroke-width="1.2"/>
<line x1="948.0" y1="530.2" x2="932.4" y2="566.1" stroke="#e88080" stroke-width="1" stroke-dasharray="6,1.5"/>
<line x1="955.0" y1="530.4" x2="939.9" y2="566.2" stroke="#e88080" stroke-width="1" stroke-dasharray="6,1.5"/>
<line x1="962.0" y1="530.7" x2="947.3" y2="566.3" stroke="#e88080" stroke-width="1" stroke-dasharray="6,1.5"/>
<line x1="969.0" y1="530.9" x2="954.8" y2="566.4" stroke="#e88080" stroke-width="1" stroke-dasharray="6,1.5"/>
<line x1="976.0" y1="531.1" x2="962.2" y2="566.6" stroke="#e88080" stroke-width="1" stroke-dasharray="6,1.5"/>
<line x1="983.0" y1="531.3" x2="969.7" y2="566.7" stroke="#e88080" stroke-width="1" stroke-dasharray="6,1.5"/>
<line x1="990.0" y1="531.6" x2="977.1" y2="566.8" stroke="#e88080" stroke-width="1" stroke-dasharray="6,1.5"/>
<line x1="997.0" y1="531.8" x2="984.6" y2="566.9" stroke="#e88080" stroke-width="1" stroke-dasharray="6,1.5"/>
<polygon points="924,564 992,567 990,574 923,571" fill="#d87878" stroke="#000" stroke-width="0.8"/>
<ellipse cx="955" cy="577" rx="8" ry="3" fill="#222"/>
<polygon points="1008,586 1128,590 1128,598 1008,594" fill="#b8b8b8" stroke="#000" stroke-width="0.8"/>
<polygon points="1023,589 1101,591 1086,640 1013,639" fill="#b4b4b4" stroke="#000" stroke-width="0.8"/>
<polygon points="1023,589 1028,589 1017,639 1012,639" fill="#1aa0a0" stroke="#000" stroke-width="0.8"/>
<polygon points="1098,591 1103,591 1089,640 1084,640" fill="#1aa0a0" stroke="#000" stroke-width="0.8"/>
<polygon points="1045,592 1055,592 1040,630 1030,630" fill="url(#colg)" stroke="#000" stroke-width=".6"/>
<polygon points="1040,614 1066,615 1066,632 1040,631" fill="#b8b8b8" stroke="#000" stroke-width="0.8"/>
<ellipse cx="1052" cy="622" rx="3" ry="3" fill="#6a16c8"/>
<ellipse cx="1030" cy="626" rx="5" ry="5" fill="#c8c8c8" stroke="#000" stroke-width="0.8"/>
<polygon points="1008,536 1128,538 1120,592 1010,590" fill="#a8a8a8" stroke="#000" stroke-width="1"/>
<polygon points="1015,534 1128,536 1120,562 1008,562" fill="#1fa24e" stroke="#000" stroke-width="1"/>
<ellipse cx="1040" cy="549" rx="8" ry="3" fill="#0a4a20" stroke="#000" stroke-width="0.6"/>
<ellipse cx="1092" cy="552" rx="8" ry="3" fill="#0a4a20" stroke="#000" stroke-width="0.6"/>
<polygon points="1008,562 1120,565 1117,592 1010,590" fill="#a4a4a4" stroke="#000" stroke-width="0.8"/>
<polygon points="1110,562 1120,560 1117,590 1108,590" fill="#0d6e30" stroke="#000" stroke-width="0.6"/>
<polygon points="1058,558 1080,558 1080,574 1058,574" fill="#18c0d0" stroke="#000" stroke-width="0.8"/>
<polygon points="926,606 954,606 954,638 926,638" fill="#555" stroke="#000" stroke-width="1"/>
<polygon points="954,606 982,606 983,639 954,638" fill="#5a5a5a" stroke="#000" stroke-width="1"/>
<polygon points="928,604 982,604 982,612 928,612" fill="#666" stroke="#000" stroke-width="0.6"/>
<ellipse cx="940" cy="610" rx="4" ry="1.5" fill="#2a8a4a"/>
<ellipse cx="968" cy="610" rx="4" ry="1.5" fill="#2a8a4a"/>
<polygon points="739,441 1148,452.5 1148,469.5 739,458" fill="#e0a04e" stroke="#000" stroke-width="1.1"/>
<line x1="739.0" y1="444.4" x2="1148.0" y2="455.9" stroke="#000" stroke-width="1.15" stroke-dasharray="77,15,67,10" stroke-dashoffset="55"/>
<line x1="739.0" y1="447.8" x2="1148.0" y2="459.3" stroke="#000" stroke-width="1.15" stroke-dasharray="140,12,93,14" stroke-dashoffset="49"/>
<line x1="739.0" y1="451.2" x2="1148.0" y2="462.7" stroke="#000" stroke-width="1.15" stroke-dasharray="133,13,108,15" stroke-dashoffset="52"/>
<line x1="739.0" y1="454.6" x2="1148.0" y2="466.1" stroke="#000" stroke-width="1.15" stroke-dasharray="134,11,83,16" stroke-dashoffset="3"/>
<line x1="953" y1="327" x2="953" y2="376" stroke="#28c8d0" stroke-width="2"/>
<ellipse cx="953" cy="328" rx="4" ry="2" fill="#28c8d0"/>
<path d="M913,335 Q929,342 930,362 L930,378" fill="none" stroke="#000" stroke-width="13"/>
<path d="M913,335 Q929,342 930,362 L930,378" fill="none" stroke="#e8e8e8" stroke-width="11"/>
<ellipse cx="911" cy="334" rx="6" ry="5" fill="#f4f4f4" stroke="#000" stroke-width="1"/>
<polygon points="919,360 940,360 939,377 921,377" fill="#c4c4c4" stroke="#000" stroke-width="0.8"/>
<ellipse cx="929.5" cy="360" rx="10.5" ry="3" fill="#d8d8d8" stroke="#000" stroke-width="0.8"/>
<polygon points="901,411 911,409 912,441 902,434" fill="#d8d8d8" stroke="#000" stroke-width="0.8"/>
<polygon points="910,373 936,369 964,384 982,436 985,445 960,448 910,441" fill="#dcdcdc" stroke="#000" stroke-width="1"/>
<polygon points="912,375 922,372 938,372 960,385 955,388 930,378" fill="#eeeeee" stroke="#000" stroke-width="0.6"/>
<path d="M915,380 Q948,402 960,446" fill="none" stroke="#000" stroke-width=".9"/>
<path d="M924,377 Q953,398 970,444" fill="none" stroke="#000" stroke-width=".9"/>
<line x1="940" y1="392" x2="948" y2="389" stroke="#000" stroke-width="0.7"/>
<line x1="946" y1="403" x2="953" y2="400" stroke="#000" stroke-width="0.7"/>
<line x1="952" y1="418" x2="960" y2="414" stroke="#000" stroke-width="0.7"/>
<line x1="908" y1="420" x2="957" y2="445" stroke="#000" stroke-width="0.8"/>
<line x1="946" y1="400" x2="965" y2="396" stroke="#000" stroke-width="0.7"/>
<ellipse cx="974" cy="436" rx="9" ry="4" fill="#e4e4e4" stroke="#000" stroke-width="0.8"/>
<polygon points="964,386 973,385 973,412 964,412" fill="#6a16c8" stroke="#000" stroke-width="0.6"/>
<ellipse cx="968.5" cy="386" rx="5.5" ry="2" fill="#7c2ad8" stroke="#000" stroke-width="0.6"/>
<ellipse cx="972" cy="444" rx="14" ry="5" fill="#d8d8d8" stroke="#000" stroke-width="0.8"/>
<polygon points="972,340 1130,345 1130,443 972,438" fill="#003a78" stroke="#000" stroke-width="1.2"/>
<polygon points="979,349 1122,353 1123,436 980,432" fill="#6e7088" stroke="#000" stroke-width="1.2"/>
<polygon points="737,321 845,325 849,327 849,455 845,455 737,450" fill="#00c8c8" stroke="#000" stroke-width="1"/>
<polygon points="845,325 850,327 850,455 845,455" fill="#008c90" stroke="#000" stroke-width="0.8"/>
<polygon points="743,333 840,336 842,447 745,443" fill="none" stroke="#000" stroke-width="1"/>
<polygon points="752,340 829,342 830,398 753,396" fill="#33006a" stroke="#000" stroke-width="1"/>
<ellipse cx="752.5" cy="405" rx="3.5" ry="3.5" fill="none" stroke="#000" stroke-width="0.6"/>
<ellipse cx="766.5" cy="413.5" rx="5" ry="5" fill="#20c020" stroke="#000" stroke-width="1"/>
<ellipse cx="790.5" cy="414" rx="5" ry="5" fill="#20c020" stroke="#000" stroke-width="1"/>
<ellipse cx="766.5" cy="432.5" rx="5" ry="5" fill="#20c020" stroke="#000" stroke-width="1"/>
<ellipse cx="790.5" cy="433" rx="5" ry="5" fill="#20c020" stroke="#000" stroke-width="1"/>
<ellipse cx="814.5" cy="434" rx="5" ry="5" fill="#20c020" stroke="#000" stroke-width="1"/>
<ellipse cx="814" cy="415.5" rx="6.5" ry="6.5" fill="#b01818" stroke="#000" stroke-width="1"/>
<polygon points="733,636 1172,647 1172,858 735,843" fill="#d6d6d6" stroke="#000" stroke-width="1"/>
<polygon points="751,661 950,667 955,832 753,826" fill="#c9c9c9" stroke="#000" stroke-width="1.2"/>
<polygon points="950,667 1152,672 1155,838 955,832" fill="#c9c9c9" stroke="#000" stroke-width="1.2"/>
<line x1="747" y1="652" x2="1152" y2="663" stroke="#000" stroke-width="0.8"/>
<line x1="747" y1="638" x2="747" y2="843" stroke="#000" stroke-width="0.6"/>
<line x1="1152" y1="648" x2="1155" y2="855" stroke="#000" stroke-width="0.6"/>
<rect x="930" y="735" width="10" height="29" fill="#e8e8e8" stroke="#000" stroke-width="1.2" rx="2"/>
<rect x="933" y="739" width="4" height="22" fill="none" stroke="#000" stroke-width="1.2" rx="2"/>
<rect x="965" y="736" width="10" height="29" fill="#e8e8e8" stroke="#000" stroke-width="1.2" rx="2"/>
<rect x="968" y="740" width="4" height="22" fill="none" stroke="#000" stroke-width="1.2" rx="2"/>
<polygon points="733,632 1168,643 1168,649 733,638" fill="#e6e6e6" stroke="#000" stroke-width="0.8"/>
<polygon points="726,306 729,634 745,634 739,306" fill="#e0a04e" stroke="#000" stroke-width="1.1"/>
<line x1="729.2" y1="306.0" x2="733.0" y2="634.0" stroke="#000" stroke-width="1.15" stroke-dasharray="95,17,60,11" stroke-dashoffset="69"/>
<line x1="732.5" y1="306.0" x2="737.0" y2="634.0" stroke="#000" stroke-width="1.15" stroke-dasharray="133,17,53,16" stroke-dashoffset="27"/>
<line x1="735.8" y1="306.0" x2="741.0" y2="634.0" stroke="#000" stroke-width="1.15" stroke-dasharray="133,12,76,7" stroke-dashoffset="8"/>
<polygon points="1148,318 1152,645 1168,645 1162,318" fill="#e0a04e" stroke="#000" stroke-width="1.1"/>
<line x1="1151.5" y1="318.0" x2="1156.0" y2="645.0" stroke="#000" stroke-width="1.15" stroke-dasharray="121,18,101,7" stroke-dashoffset="44"/>
<line x1="1155.0" y1="318.0" x2="1160.0" y2="645.0" stroke="#000" stroke-width="1.15" stroke-dasharray="68,14,59,6" stroke-dashoffset="37"/>
<line x1="1158.5" y1="318.0" x2="1164.0" y2="645.0" stroke="#000" stroke-width="1.15" stroke-dasharray="114,14,55,6" stroke-dashoffset="77"/>
<polygon points="739,306 1148,317 1148,334 739,323" fill="#e0a04e" stroke="#000" stroke-width="1.1"/>
<line x1="739.0" y1="309.4" x2="1148.0" y2="320.4" stroke="#000" stroke-width="1.15" stroke-dasharray="138,8,88,15" stroke-dashoffset="42"/>
<line x1="739.0" y1="312.8" x2="1148.0" y2="323.8" stroke="#000" stroke-width="1.15" stroke-dasharray="130,12,104,9" stroke-dashoffset="4"/>
<line x1="739.0" y1="316.2" x2="1148.0" y2="327.2" stroke="#000" stroke-width="1.15" stroke-dasharray="99,8,49,7" stroke-dashoffset="76"/>
<line x1="739.0" y1="319.6" x2="1148.0" y2="330.6" stroke="#000" stroke-width="1.15" stroke-dasharray="128,8,65,12" stroke-dashoffset="37"/>
<rect x="743.5" y="852" width="7" height="13" fill="#3a0c88" stroke="#12022e" stroke-width="0.8"/>
<polygon points="741,864 753,864 753,872 741,872" fill="#4a169c" stroke="#12022e" stroke-width="0.8"/>
<path d="M737,871 L757,871 L765,879 Q747,889 729,879Z" fill="#3a0c88" stroke="#12022e" stroke-width="1"/>
<line x1="743" y1="876" x2="743" y2="883" stroke="#12022e" stroke-width="0.8"/>
<line x1="751" y1="876" x2="751" y2="883" stroke="#12022e" stroke-width="0.8"/>
<line x1="735" y1="878" x2="759" y2="878" stroke="#12022e" stroke-width="0.6"/>
<rect x="1163.5" y="864" width="7" height="13" fill="#3a0c88" stroke="#12022e" stroke-width="0.8"/>
<polygon points="1161,876 1173,876 1173,884 1161,884" fill="#4a169c" stroke="#12022e" stroke-width="0.8"/>
<path d="M1157,883 L1177,883 L1185,891 Q1167,901 1149,891Z" fill="#3a0c88" stroke="#12022e" stroke-width="1"/>
<line x1="1163" y1="888" x2="1163" y2="895" stroke="#12022e" stroke-width="0.8"/>
<line x1="1171" y1="888" x2="1171" y2="895" stroke="#12022e" stroke-width="0.8"/>
<line x1="1155" y1="890" x2="1179" y2="890" stroke="#12022e" stroke-width="0.6"/>
<rect x="737" y="843" width="42" height="7" fill="#e0e0e0" stroke="#000" stroke-width="0.8"/>
<rect x="1133" y="854" width="38" height="7" fill="#e0e0e0" stroke="#000" stroke-width="0.8"/>
<g opacity=".88"><g fill="none" stroke="#f08228" stroke-width="2.2"><path d="M892,518 v19 h42 v-19"/><path d="M897,512 v22 M901,520 v12 M926,520 v12 M931,512 v22"/></g><path d="M916,514 a10 10 0 1 0 8 16 a8 8 0 1 1 -8 -16z" fill="#f8a820"/></g>
<text x="946" y="530" font-size="17" font-weight="bold" fill="#f0862a" opacity=".9" font-family="Liberation Sans, sans-serif">智造资料网</text>
<text x="946" y="538" font-size="5" fill="#e08020" opacity=".8" font-family="Liberation Sans, sans-serif" textLength="83">INTELLIGENT MANUFACTURING DATA</text>
</svg>
<div class="t" style="left:1486px;top:1004.5px;font-size:12px;color:#111;">绝对 XY 上视图</div>
<div class="t" style="left:1600px;top:1004.5px;font-size:12px;color:#111;">绝对视图</div>
<div class="t" style="left:1668px;top:1005px;font-size:12px;color:#111;font-weight:bold">LAYER0</div>
<div class="t" style="left:1141px;top:1024.5px;font-size:12px;color:#111;">拴牢</div>
<div class="t" style="left:1463px;top:1024px;font-size:12px;color:#111;">LS: 1.00 PS: 1.00</div>
<div class="t" style="left:1589px;top:1024.5px;font-size:12.3px;color:#111;">单位: 毫米</div>
<div class="t" style="left:1663px;top:1024px;font-size:13px;color:#111;">X = 1336.137 Y = 1267.354 Z = 0000.000</div>
<div class="t" style="left:1814px;top:1043px;font-size:11px;color:#111;color:#ddd">12:51</div>
<svg class="a" style="left:0;top:0" width="1920" height="1048"><rect x="1341" y="1003" width="131" height="16" fill="#fff"/><line x1="1337.5" y1="1003" x2="1337.5" y2="1019" stroke="#fff" stroke-width="2" stroke-dasharray="1.5,1.5"/><line x1="1476.5" y1="1003" x2="1476.5" y2="1019" stroke="#fff" stroke-width="2" stroke-dasharray="1.5,1.5"/><line x1="1660.5" y1="1003" x2="1660.5" y2="1019" stroke="#fff" stroke-width="2" stroke-dasharray="1.5,1.5"/><circle cx="1468" cy="1008" r="3.5" fill="none" stroke="#3a6ad0" stroke-width="1.3"/><path d="M1465.5 1010.5l-4 4" stroke="#3a6ad0" stroke-width="1.5"/><line x1="1591.5" y1="1003" x2="1591.5" y2="1019" stroke="#9a9a9a"/><line x1="1726.5" y1="1003" x2="1726.5" y2="1019" stroke="#9a9a9a"/><line x1="1758.5" y1="1003" x2="1758.5" y2="1019" stroke="#9a9a9a"/><line x1="1800.5" y1="1003" x2="1800.5" y2="1019" stroke="#9a9a9a"/><line x1="1843.5" y1="1003" x2="1843.5" y2="1019" stroke="#9a9a9a"/><line x1="1886.5" y1="1003" x2="1886.5" y2="1019" stroke="#9a9a9a"/><rect x="1762" y="1006" width="32" height="10.5" fill="#4a6898"/><rect x="1805" y="1006" width="32" height="10.5" fill="#4a6898"/><rect x="1848" y="1006" width="32" height="10.5" fill="#4a6898"/><circle cx="1900" cy="1010" r="6" fill="#2a8ae0"/><path d="M1896 1006q3 2 2 5t3 4M1901 1005q2 3 4 2" stroke="#30b030" stroke-width="2.4" fill="none"/><circle cx="1900" cy="1010" r="6" fill="none" stroke="#145" stroke-width=".6"/><line x1="1133.5" y1="1023" x2="1133.5" y2="1039" stroke="#9a9a9a"/><line x1="1175.5" y1="1023" x2="1175.5" y2="1039" stroke="#9a9a9a"/><line x1="1206.5" y1="1023" x2="1206.5" y2="1039" stroke="#9a9a9a"/><line x1="1237.5" y1="1023" x2="1237.5" y2="1039" stroke="#9a9a9a"/><line x1="1268.5" y1="1023" x2="1268.5" y2="1039" stroke="#9a9a9a"/><line x1="1300.5" y1="1023" x2="1300.5" y2="1039" stroke="#9a9a9a"/><line x1="1330.5" y1="1023" x2="1330.5" y2="1039" stroke="#9a9a9a"/><line x1="1361.5" y1="1023" x2="1361.5" y2="1039" stroke="#9a9a9a"/><line x1="1454.5" y1="1023" x2="1454.5" y2="1039" stroke="#9a9a9a"/><line x1="1580.5" y1="1023" x2="1580.5" y2="1039" stroke="#9a9a9a"/><line x1="1655.5" y1="1023" x2="1655.5" y2="1039" stroke="#9a9a9a"/><rect x="1182.5" y="1022.5" width="16" height="16" fill="#d8d0dc" stroke="#5a5a6a" stroke-width="1.2"/><path d="M1185.5 1030a5 5 0 0 1 9-3" stroke="#e05060" stroke-width="2" fill="none"/><path d="M1195.5 1031a5 5 0 0 1-9 3" stroke="#e05060" stroke-width="2" fill="none"/><circle cx="1193" cy="1027" r="1.2" fill="#5a8ad0"/><circle cx="1188" cy="1034" r="1.2" fill="#5a8ad0"/><rect x="1212" y="1021" width="18" height="18" fill="#fbe07a"/><path d="M1213 1022l6 1 3-1 1 4 3 2-3 2 1 4-4-1-3 3-1-4-3-2 3-3z" fill="#c040d0"/><circle cx="1217" cy="1026" r="2" fill="#ffe040"/><path d="M1219 1026l8 8-3 .5 1.5 2-1.5 1-1.5-2-2.5 2z" fill="#f0f0f0" stroke="#777" stroke-width=".7"/><rect x="1246" y="1027" width="9" height="11" fill="#e8f0ff" stroke="#4a6aa0" stroke-width=".8"/><circle cx="1249" cy="1031" r="1.2" fill="#3a6ad0"/><circle cx="1252.5" cy="1035" r="1.2" fill="#3a6ad0"/><path d="M1248 1029l6-6 7 1-1 4-6 1-3 3z" fill="#f0b060" stroke="#a06020" stroke-width=".7"/><ellipse cx="1285" cy="1038" rx="6" ry="1.8" fill="#888" opacity=".5"/><text x="1278.5" y="1037" font-size="18" font-weight="bold" fill="#5a88d0" font-family="Liberation Sans">?</text><path d="M1307 1024l4-2 4 2v5l-4 2-4-2z" fill="#4a88e0" stroke="#1a3a8a" stroke-width=".7"/><path d="M1313 1030l4-2 5 2v6l-5 2-4-2z" fill="#6a9aaa" stroke="#1a2a3a" stroke-width=".8"/><path d="M1305 1034h7M1309 1031l3 3-3 3" stroke="#e01010" stroke-width="1.8" fill="none"/><rect x="1336" y="1021" width="18" height="18" fill="#fbe07a"/><path d="M1338 1026l7-3 7 3v9l-7 3-7-3z" fill="#8aaa98" stroke="#1a5ad0" stroke-width="1"/><path d="M1338 1026l7 3 7-3-7-3z" fill="#e020e0"/><rect x="1430" y="1023" width="16" height="15" fill="none" stroke="#5a6a8a" stroke-width="1.2"/><path d="M1430 1031h16M1438 1023v15" stroke="#3a4a6a" stroke-width="1"/><g><ellipse cx="1406" cy="1039" rx="16" ry="2" fill="#a87040" opacity=".6"/><path d="M1404 973q-4-8 0-9 3 0 2 5M1409 972q0-6 3-5" stroke="#9a5020" stroke-width="2.4" fill="none"/><circle cx="1390" cy="978" r="6" fill="#c88a4a" stroke="#9a5a2a" stroke-width=".8"/><circle cx="1423" cy="978" r="6" fill="#c88a4a" stroke="#9a5a2a" stroke-width=".8"/><ellipse cx="1391" cy="1027" rx="6" ry="4" fill="#fff050" stroke="#c89030" stroke-width=".6"/><ellipse cx="1422" cy="1023" rx="5" ry="4" fill="#fff050" stroke="#c89030" stroke-width=".6"/><path d="M1393 1018h26l3 16-5 6h-6l-2-4-5 4h-9z" fill="#fff050" stroke="#c89030" stroke-width=".7"/><ellipse cx="1406" cy="998" rx="26.5" ry="24" fill="#c88a4a" stroke="#9a5a2a" stroke-width=".8"/><ellipse cx="1406" cy="1001" rx="20.5" ry="18.5" fill="#fff050" stroke="#c88a30" stroke-width=".6"/><circle cx="1395.5" cy="994" r="1.5" fill="#5a2a10"/><circle cx="1416.5" cy="994" r="1.5" fill="#5a2a10"/><ellipse cx="1391" cy="1000" rx="3.5" ry="2.5" fill="#f8a040"/><ellipse cx="1422" cy="1000" rx="3.5" ry="2.5" fill="#f8a040"/><circle cx="1397" cy="1030" r="7" fill="#c88a4a" stroke="#9a5a2a" stroke-width=".6"/><circle cx="1393" cy="1024" r="2.4" fill="#c88a4a"/><circle cx="1401" cy="1024" r="2.4" fill="#c88a4a"/><circle cx="1393.5" cy="1032" r="1.6" fill="#f090c0"/><circle cx="1400.5" cy="1032" r="1.6" fill="#f090c0"/><circle cx="1367.5" cy="1005.5" r="8.5" fill="#98604a"/><text x="1362.5" y="1011" font-size="12" font-weight="bold" fill="#fff" font-family="Liberation Sans">C</text><circle cx="1374.5" cy="1026.5" r="8.5" fill="#98604a"/><path d="M1369 1023l3-2h5l3 2-2 3h-1v5h-5v-5h-1z" fill="#fff"/><path d="M1437 972l4 17 5-10 5 10 4-17" stroke="#b87a4a" stroke-width="7" fill="none" stroke-linejoin="round"/><path d="M1437 972l4 17 5-10 5 10 4-17" stroke="#fff" stroke-width="4.5" fill="none" stroke-linejoin="round"/><circle cx="1441" cy="979" r="1.5" fill="#d8a070"/><circle cx="1451" cy="984" r="1.5" fill="#d8a070"/><circle cx="1440" cy="992" r="3.5" fill="#c88a5a" stroke="#9a5a2a" stroke-width=".6"/><circle cx="1453" cy="992" r="3.5" fill="#c88a5a" stroke="#9a5a2a" stroke-width=".6"/><ellipse cx="1446.5" cy="1002" rx="9.5" ry="10" fill="#c88a5a" stroke="#9a5a2a" stroke-width=".8"/><ellipse cx="1446.5" cy="1002" rx="3" ry="4.5" fill="#fff"/><path d="M1439 1013l4 18 4-10 4 10 4-18" stroke="#b87a3a" stroke-width="7.5" fill="none" stroke-linejoin="round"/><path d="M1439 1013l4 18 4-10 4 10 4-18" stroke="#fff040" stroke-width="5" fill="none" stroke-linejoin="round"/></g></svg>
</body></html>
